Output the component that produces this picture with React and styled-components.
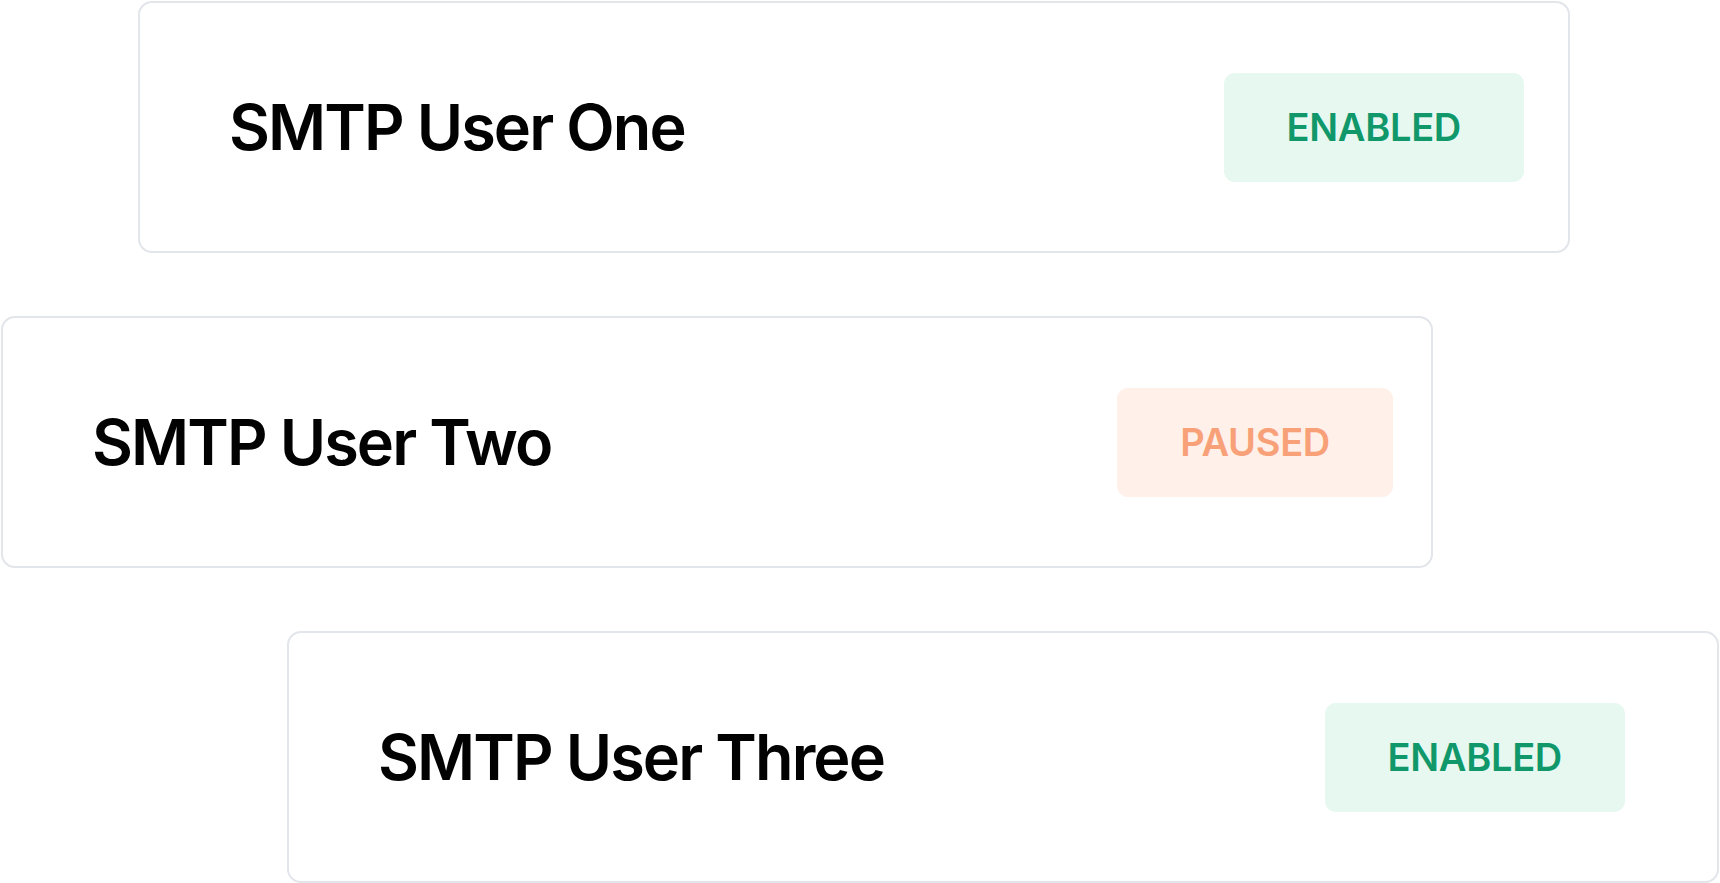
import React from 'react'
import { styled, createGlobalStyle } from 'styled-components'

const GlobalStyle = createGlobalStyle`
  html, body {
    margin: 0;
    padding: 0;
    background: #ffffff;
    overflow: hidden;
  }
  body {
    font-family: "Inter", "Noto Sans", sans-serif;
  }
`

const users = [
  { name: 'SMTP User One', status: 'enabled', offset: 138, inset: 44 },
  { name: 'SMTP User Two', status: 'paused', offset: 1, inset: 38 },
  { name: 'SMTP User Three', status: 'enabled', offset: 287, inset: 92 },
]

const App = () => {
  return (
    <>
      <GlobalStyle />
      <Stack>
        {users.map((user) => (
          <UserCard key={user.name} $offset={user.offset} $inset={user.inset}>
            <UserName>{user.name}</UserName>
            <StatusBadge $status={user.status}>
              {user.status === 'enabled' ? 'ENABLED' : 'PAUSED'}
            </StatusBadge>
          </UserCard>
        ))}
      </Stack>
    </>
  )
}

export default App

const Stack = styled.div`
  display: flex;
  flex-direction: column;
  gap: 63px;
  padding-top: 1px;
  width: 1720px;
  height: 883px;
  box-sizing: border-box;
`

const UserCard = styled.div`
  box-sizing: border-box;
  width: 1432px;
  height: 252px;
  margin-left: ${(p) => p.$offset}px;
  padding: 0 ${(p) => p.$inset}px 0 89px;
  border: 2px solid #e2e5ea;
  border-radius: 14px;
  background: #ffffff;
  display: flex;
  align-items: center;
  justify-content: space-between;
  flex-shrink: 0;
`

const UserName = styled.h2`
  margin: 0;
  font-family: "Inter", sans-serif;
  font-size: 63px;
  font-weight: 600;
  color: #020202;
  letter-spacing: -1.9px;
`

const StatusBadge = styled.span`
  display: inline-flex;
  align-items: center;
  justify-content: center;
  height: 109px;
  padding: 0 63px;
  border-radius: 11px;
  font-family: "Inter", sans-serif;
  font-size: 38px;
  font-weight: 600;
  letter-spacing: -0.3px;
  background: ${(p) => (p.$status === 'enabled' ? '#e7f8f1' : '#fff0e9')};
  color: ${(p) => (p.$status === 'enabled' ? '#10986a' : '#f8a078')};
`
